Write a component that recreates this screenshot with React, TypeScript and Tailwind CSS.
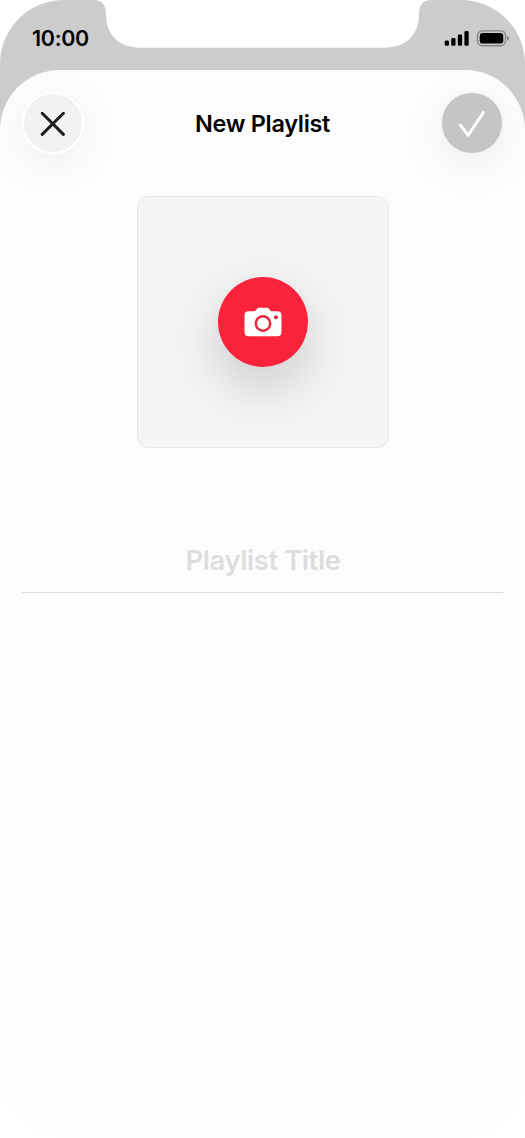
function StatusIcons() {
  return (
    <svg width="66" height="20" viewBox="0 0 66 20" fill="none">
      <rect x="0.7" y="12.6" width="4.300" height="5.2" rx="1.4" fill="#000" />
      <rect x="7.2" y="10" width="4.300" height="7.8" rx="1.4" fill="#000" />
      <rect x="13.8" y="6.6" width="4.300" height="11.200" rx="1.4" fill="#000" />
      <rect x="20.4" y="3" width="4.300" height="14.8" rx="1.4" fill="#000" />
      <rect x="33.500" y="2.900" width="28" height="14.8" rx="4.8" stroke="#858585" strokeWidth="1.4" />
      <rect x="35.700" y="5" width="23.6" height="10.600" rx="3.2" fill="#000" />
      <path d="M63 7.900c1.500.5 2 1.300 2 2.400s-.5 1.900-2 2.400z" fill="#858585" />
    </svg>
  );
}

function Notch() {
  return (
    <svg className="absolute left-[90px] top-0" width="345" height="48" viewBox="0 0 345 48">
      <path d="M4 0H341C333 0 329 5 329 14C329 34 317 47.700 294 47.700H51C28 47.700 16 34 16 14C16 5 12 0 4 0Z" fill="#fff" />
    </svg>
  );
}

function StatusBar() {
  return (
    <div className="relative flex h-[70px] items-start justify-between pl-8 pr-[15px] pt-[28px]">
      <Notch />
      <span className="relative text-[21.500px] font-semibold leading-[21px] tracking-[-0.3px] text-black">10:00</span>
      <StatusIcons />
    </div>
  );
}

function Header() {
  return (
    <header className="flex h-[62px] items-center justify-between">
      <button
        aria-label="Close"
        className="flex size-[62px] items-center justify-center rounded-full border-2 border-white bg-[#f2f2f2] shadow-[0_10px_50px_rgba(0,0,0,0.07)]"
      >
        <svg width="26" height="26" viewBox="0 0 26 26" fill="none">
          <path d="M2.200 3.200 23.400 24.400M23.400 3.200 2.200 24.400" stroke="#1b1b1b" strokeWidth="2.900" strokeLinecap="round" />
        </svg>
      </button>
      <h1 className="relative top-px text-[23.500px] font-semibold leading-7 tracking-[-0.3px] text-black">New Playlist</h1>
      <button
        aria-label="Done"
        className="flex size-[62px] items-center justify-center rounded-full border border-[#f4f4f4] bg-[#c5c5c5] shadow-[0_10px_50px_rgba(0,0,0,0.08)]"
      >
        <svg width="28" height="28" viewBox="0 0 28 28" fill="none">
          <path d="M2.400 16.200 10.200 26.300 25.400 3.400" stroke="#fff" strokeWidth="2.900" strokeLinecap="round" strokeLinejoin="round" />
        </svg>
      </button>
    </header>
  );
}

function CoverPicker() {
  return (
    <div className="ml-[115px] mt-[42px] flex size-[252px] items-center justify-center rounded-[11px] border border-[#e8e8e8] bg-[#f5f5f5]">
      <button
        aria-label="Add cover photo"
        className="flex size-[90px] items-center justify-center rounded-full bg-[#fb233b] shadow-[0_20px_56px_rgba(0,0,0,0.19)]"
      >
        <svg width="38" height="30" viewBox="0 0 38 30" fill="none">
          <path
            d="M4.800 4.300H9.500C11 4.300 11.500 3.800 12.300 2.700C13.200 1.300 14 .7 15.500 .7H22.500C24 .7 24.800 1.300 25.700 2.700C26.500 3.800 27 4.300 28.500 4.300H33.200Q37.500 4.300 37.500 8.600V25Q37.500 29.300 33.200 29.300H4.800Q.5 29.300 .5 25V8.600Q.5 4.300 4.800 4.300Z"
            fill="#fff"
          />
          <circle cx="19" cy="16.500" r="7.200" stroke="#e5283e" strokeWidth="2.500" />
          <circle cx="31.900" cy="10.200" r="2" fill="#dc283e" />
        </svg>
      </button>
    </div>
  );
}

export default function App() {
  return (
    <div className="h-[1138px] w-[525px] bg-white font-['Inter','Liberation_Sans',sans-serif]">
      <div className="h-full overflow-hidden rounded-b-[66px] rounded-t-[64px] bg-[linear-gradient(#cccccc_300px,#fdfdfd_300px)]">
        <StatusBar />
        <main className="h-[1068px] overflow-hidden rounded-t-[60px] bg-[#fdfdfd] px-[22px] pt-[22px]">
          <Header />
          <CoverPicker />
          <div className="mt-[93px] h-[52px] border-b border-[#dedede]">
            <input
              aria-label="Playlist Title"
              placeholder="Playlist Title"
              className="block h-10 w-full bg-transparent pl-px text-center text-[27.500px] font-semibold tracking-[-0.45px] text-black outline-none placeholder:text-[#dddddd]"
            />
          </div>
        </main>
      </div>
    </div>
  );
}
